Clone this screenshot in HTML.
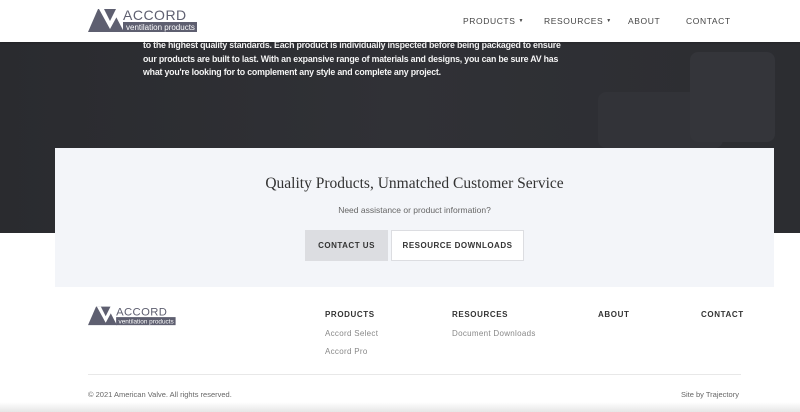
<!DOCTYPE html>
<html><head><style>
*{margin:0;padding:0;box-sizing:border-box}
body{width:800px;height:412px;overflow:hidden;background:#fff;font-family:"Liberation Sans",sans-serif;position:relative}
.hdr{position:absolute;top:0;left:0;width:800px;height:42px;background:#fff;z-index:3;box-shadow:0 1px 2px rgba(0,0,0,.2)}
.nav{position:absolute;top:16px;font-size:8.5px;letter-spacing:.6px;color:#444}
.nav small{font-size:5px;vertical-align:2px}
.dark{position:absolute;top:42px;left:0;width:800px;height:191px;background:linear-gradient(90deg,#2a2b2f 0%,#303136 50%,#2c2d31 100%)}
.chair{position:absolute;background:#323338;border-radius:8px}
.intro{position:absolute;left:143px;top:39px;width:420px;font-size:8.8px;line-height:13.5px;color:#f4f4f4;font-weight:bold;letter-spacing:-.2px}
.card{position:absolute;left:55px;top:148px;width:719px;height:139px;background:#f3f5f9}
.card h2{position:absolute;top:27px;width:100%;text-align:center;font-family:"Liberation Serif",serif;font-weight:normal;font-size:15.5px;color:#333}
.card p{position:absolute;top:57px;width:100%;text-align:center;font-size:8.5px;color:#666}
.btn{position:absolute;top:82px;height:31px;font-size:8px;font-weight:bold;letter-spacing:.5px;color:#333;display:flex;align-items:center;justify-content:center}
.fh{position:absolute;top:310px;font-size:8px;font-weight:bold;letter-spacing:.6px;color:#333}
.fl{position:absolute;font-size:8px;color:#888;letter-spacing:.3px}
</style></head><body>
<div class="dark">
<div class="chair" style="left:598px;top:50px;width:125px;height:56px"></div>
<div class="chair" style="left:690px;top:10px;width:85px;height:90px;background:#34353a"></div>
</div>
<div class="intro">to the highest quality standards. Each product is individually inspected before being packaged to ensure our products are built to last. With an expansive range of materials and designs, you can be sure AV has what you're looking for to complement any style and complete any project.</div>
<div class="hdr">
<svg style="position:absolute;left:88px;top:7px" width="112" height="26" viewBox="0 0 112 26">
<polygon points="0,25 10,2 24,2 36,25" fill="#5e5f70"/>
<polygon points="11,2 33,2 22,22" fill="#fff"/>
<polygon points="16,2 28,2 22,14" fill="#5e5f70"/>
<text x="35" y="13" font-family="Liberation Sans" font-size="14" fill="#5e5f70" letter-spacing=".5">ACCORD</text>
<rect x="35" y="15" width="74" height="10" fill="#5e5f70"/>
<text x="38" y="23" font-family="Liberation Sans" font-size="8" fill="#fff">ventilation products</text>
</svg>
<div class="nav" style="left:463px">PRODUCTS <small>▼</small></div>
<div class="nav" style="left:544px">RESOURCES <small>▼</small></div>
<div class="nav" style="left:628px">ABOUT</div>
<div class="nav" style="left:686px">CONTACT</div>
</div>
<div class="card">
<h2>Quality Products, Unmatched Customer Service</h2>
<p>Need assistance or product information?</p>
<div class="btn" style="left:250px;width:83px;background:#dcdde1">CONTACT US</div>
<div class="btn" style="left:336px;width:133px;background:#fff;border:1px solid #dcdde1">RESOURCE DOWNLOADS</div>
</div>
<svg style="position:absolute;left:88px;top:305px" width="90" height="21" viewBox="0 0 112 26">
<polygon points="0,25 10,2 24,2 36,25" fill="#5e5f70"/>
<polygon points="11,2 33,2 22,22" fill="#fff"/>
<polygon points="16,2 28,2 22,14" fill="#5e5f70"/>
<text x="35" y="13" font-family="Liberation Sans" font-size="14" fill="#5e5f70" letter-spacing=".5">ACCORD</text>
<rect x="35" y="15" width="74" height="10" fill="#5e5f70"/>
<text x="38" y="23" font-family="Liberation Sans" font-size="8" fill="#fff">ventilation products</text>
</svg>
<div class="fh" style="left:325px">PRODUCTS</div>
<div class="fh" style="left:452px">RESOURCES</div>
<div class="fh" style="left:598px">ABOUT</div>
<div class="fh" style="left:701px">CONTACT</div>
<div class="fl" style="left:325px;top:329px">Accord Select</div>
<div class="fl" style="left:325px;top:347px">Accord Pro</div>
<div class="fl" style="left:452px;top:329px">Document Downloads</div>
<div style="position:absolute;left:88px;top:374px;width:653px;height:1px;background:#e8e8e8"></div>
<div class="fl" style="left:88px;top:390px;color:#666;letter-spacing:0;font-size:7.5px">© 2021 American Valve. All rights reserved.</div>
<div class="fl" style="left:681px;top:390px;color:#666;letter-spacing:0;font-size:7.5px">Site by Trajectory</div>
<div style="position:absolute;left:0;top:402px;width:800px;height:10px;background:linear-gradient(#fff,#e6e6e6)"></div>
</body></html>
